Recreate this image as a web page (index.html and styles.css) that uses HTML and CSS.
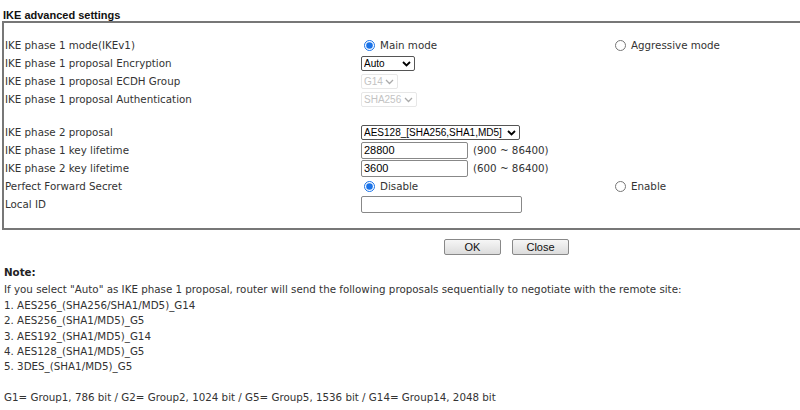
FILE: index.html
```html
<!DOCTYPE html>
<html lang="en">
<head>
    <meta charset="UTF-8">
    <title>IKE advanced settings</title>
    <link rel="stylesheet" href="styles.css">
</head>
<body>
    <div class="title">IKE advanced settings</div>

    <div class="settings-box">
        <div class="row">
            <div class="label">IKE phase 1 mode(IKEv1)</div>
            <div class="field"><label class="radio"><input type="radio" name="mode" checked> Main mode</label></div>
            <div class="field"><label class="radio"><input type="radio" name="mode"> Aggressive mode</label></div>
        </div>
        <div class="row">
            <div class="label">IKE phase 1 proposal Encryption</div>
            <div class="field">
                <span class="select-wrap">
                    <select class="sel sel-auto"><option>Auto</option></select>
                    <svg class="chevron" width="9" height="6" viewBox="0 0 9 6"><path d="M1 1 L4.5 4.5 L8 1" fill="none" stroke="#000" stroke-width="1.8"/></svg>
                </span>
            </div>
        </div>
        <div class="row">
            <div class="label">IKE phase 1 proposal ECDH Group</div>
            <div class="field">
                <span class="select-wrap">
                    <select class="sel sel-g14" disabled><option>G14</option></select>
                    <svg class="chevron" width="9" height="6" viewBox="0 0 9 6"><path d="M1 1 L4.5 4.5 L8 1" fill="none" stroke="#aaa" stroke-width="1.3"/></svg>
                </span>
            </div>
        </div>
        <div class="row">
            <div class="label">IKE phase 1 proposal Authentication</div>
            <div class="field">
                <span class="select-wrap">
                    <select class="sel sel-sha" disabled><option>SHA256</option></select>
                    <svg class="chevron" width="9" height="6" viewBox="0 0 9 6"><path d="M1 1 L4.5 4.5 L8 1" fill="none" stroke="#aaa" stroke-width="1.3"/></svg>
                </span>
            </div>
        </div>

        <div class="spacer"></div>

        <div class="row">
            <div class="label">IKE phase 2 proposal</div>
            <div class="field">
                <span class="select-wrap">
                    <select class="sel sel-aes"><option>AES128_[SHA256,SHA1,MD5]</option></select>
                    <svg class="chevron" width="9" height="6" viewBox="0 0 9 6"><path d="M1 1 L4.5 4.5 L8 1" fill="none" stroke="#000" stroke-width="1.8"/></svg>
                </span>
            </div>
        </div>
        <div class="row">
            <div class="label">IKE phase 1 key lifetime</div>
            <div class="field"><input type="text" class="txt" value="28800"><span class="range">(900 ~ 86400)</span></div>
        </div>
        <div class="row">
            <div class="label">IKE phase 2 key lifetime</div>
            <div class="field"><input type="text" class="txt" value="3600"><span class="range">(600 ~ 86400)</span></div>
        </div>
        <div class="row">
            <div class="label">Perfect Forward Secret</div>
            <div class="field"><label class="radio"><input type="radio" name="pfs" checked> Disable</label></div>
            <div class="field"><label class="radio"><input type="radio" name="pfs"> Enable</label></div>
        </div>
        <div class="row">
            <div class="label">Local ID</div>
            <div class="field"><input type="text" class="txt txt-wide" value=""></div>
        </div>
    </div>

    <div class="buttons">
        <button>OK</button>
        <button>Close</button>
    </div>

    <div class="note">
        <div class="note-title">Note:</div>
        <div>If you select "Auto" as IKE phase 1 proposal, router will send the following proposals sequentially to negotiate with the remote site:</div>
        <div>1. AES256_(SHA256/SHA1/MD5)_G14</div>
        <div>2. AES256_(SHA1/MD5)_G5</div>
        <div>3. AES192_(SHA1/MD5)_G14</div>
        <div>4. AES128_(SHA1/MD5)_G5</div>
        <div>5. 3DES_(SHA1/MD5)_G5</div>
        <div class="blank"></div>
        <div>G1= Group1, 786 bit / G2= Group2, 1024 bit / G5= Group5, 1536 bit / G14= Group14, 2048 bit</div>
    </div>
</body>
</html>
```

FILE: styles.css
```css
body {
    margin: 0;
    padding: 0;
    background: #fff;
    color: #222;
    font-family: "DejaVu Sans", Verdana, sans-serif;
    font-size: 10.3px;
    overflow: hidden;
}

.title {
    font-family: "Liberation Sans", Arial, sans-serif;
    font-weight: bold;
    font-size: 11px;
    color: #111;
    padding: 9px 0 0 3px;
    height: 12px;
}

.settings-box {
    margin: 0 -10px 0 2px;
    border: 2px solid #777;
    padding: 13px 0 15px 0;
}

.row {
    display: grid;
    grid-template-columns: 357px 251px 1fr;
    height: 18px;
    align-items: center;
}

.spacer {
    height: 15px;
}

.label {
    padding-left: 1px;
    color: #333;
}

.field {
    display: flex;
    align-items: center;
}

.radio {
    display: flex;
    align-items: center;
    color: #333;
}

.radio input {
    margin: 0 5px 0 3px;
    width: 11px;
    height: 11px;
    accent-color: #1a73e8;
}

.select-wrap {
    position: relative;
    display: inline-block;
    height: 15px;
}

.sel {
    appearance: none;
    -webkit-appearance: none;
    display: block;
    font-family: "Liberation Sans", Arial, sans-serif;
    font-size: 10px;
    height: 15px;
    line-height: 13px;
    padding: 0 12px 0 2px;
    border: 1px solid #555;
    border-radius: 2px;
    background: #fff;
    color: #000;
    box-sizing: border-box;
}

.chevron {
    position: absolute;
    right: 4px;
    top: 5px;
}

.sel-auto { width: 54px; }
.sel-g14 { width: 37px; }
.sel-sha { width: 56px; }
.sel-aes { width: 159px; }

.sel:disabled {
    border-color: #ddd;
    color: #aaa;
}

.txt {
    font-family: "Liberation Sans", Arial, sans-serif;
    font-size: 11px;
    width: 107px;
    height: 17px;
    padding: 0 2px;
    border: 1px solid #888;
    border-radius: 2px;
    color: #000;
    box-sizing: border-box;
}

.txt-wide {
    width: 161px;
}

.range {
    margin-left: 5px;
    color: #333;
}

.buttons {
    display: flex;
    gap: 11px;
    padding: 9px 0 0 444px;
    height: 16px;
}

.buttons button {
    font-family: "Liberation Sans", Arial, sans-serif;
    font-size: 11px;
    width: 57px;
    height: 16px;
    padding: 0;
    border: 1px solid #888;
    border-radius: 2px;
    background: linear-gradient(#f6f6f6, #dcdcdc);
    color: #111;
}

.note {
    padding: 10px 0 0 4px;
    color: #333;
    line-height: 15.4px;
}

.note-title {
    font-weight: bold;
    color: #222;
    margin-bottom: 2px;
}

.blank {
    height: 15.4px;
}
```
